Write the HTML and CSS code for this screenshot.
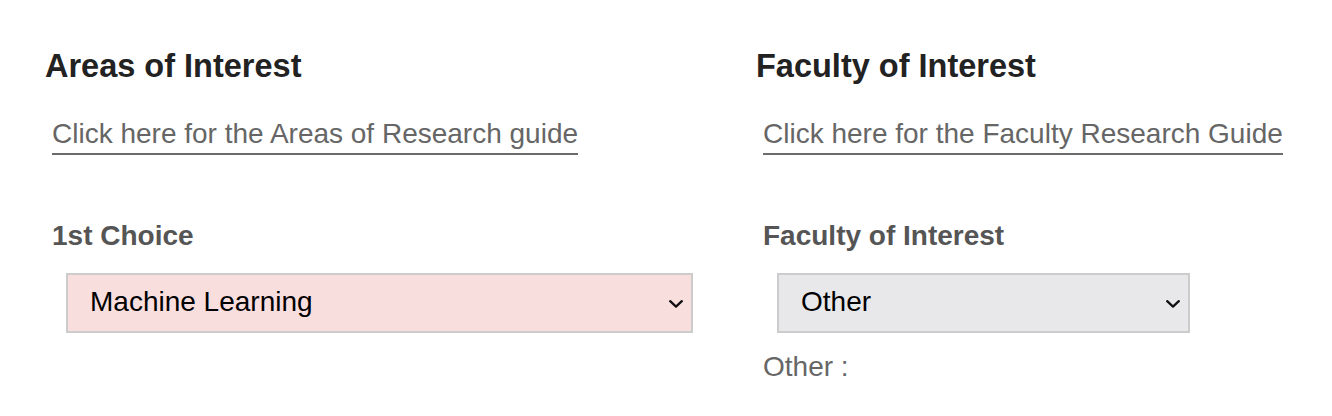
FILE: index.html
```html
<!DOCTYPE html>
<html lang="en">
<head>
<meta charset="utf-8">
<title>Areas and Faculty of Interest</title>
<link rel="stylesheet" href="styles.css">
</head>
<body>
<div class="page">
  <section class="col">
    <h2 class="heading">Areas of Interest</h2>
    <div class="body">
      <a class="guide" href="#">Click here for the Areas of Research guide</a>
      <label class="label" for="choice1">1st Choice</label>
      <div class="select-wrap">
        <select id="choice1" class="select select-pink">
          <option>Machine Learning</option>
        </select>
        <svg class="chev" width="14" height="8" viewBox="0 0 14 8"><path d="M1.2 1.2 L7 6.6 L12.8 1.2" fill="none" stroke="#111" stroke-width="2.3" stroke-linecap="round" stroke-linejoin="round"/></svg>
      </div>
    </div>
  </section>
  <section class="col">
    <h2 class="heading">Faculty of Interest</h2>
    <div class="body">
      <a class="guide" href="#">Click here for the Faculty Research Guide</a>
      <label class="label" for="faculty">Faculty of Interest</label>
      <div class="select-wrap select-wrap-narrow">
        <select id="faculty" class="select select-gray">
          <option>Other</option>
        </select>
        <svg class="chev" width="14" height="8" viewBox="0 0 14 8"><path d="M1.2 1.2 L7 6.6 L12.8 1.2" fill="none" stroke="#111" stroke-width="2.3" stroke-linecap="round" stroke-linejoin="round"/></svg>
      </div>
      <div class="other">Other :</div>
    </div>
  </section>
</div>
</body>
</html>
```

FILE: styles.css
```css
html, body {
  margin: 0;
  padding: 0;
  background: #ffffff;
}

body {
  font-family: "Liberation Sans", Arial, Helvetica, sans-serif;
}

.page {
  display: grid;
  grid-template-columns: 711px 1fr;
  padding: 46px 0 0 45px;
}

.col {
  display: flex;
  flex-direction: column;
}

.heading {
  margin: 0;
  font-size: 32.5px;
  line-height: 40px;
  font-weight: bold;
  color: #222222;
}

.body {
  display: flex;
  flex-direction: column;
  align-items: flex-start;
  padding-left: 7px;
}

.guide {
  margin-top: 32px;
  font-size: 28px;
  line-height: 32px;
  color: #666666;
  text-decoration: none;
  padding-bottom: 3px;
  border-bottom: 2px solid #6b6b6b;
}

.label {
  margin-top: 65px;
  font-size: 28px;
  line-height: 32px;
  font-weight: bold;
  color: #555555;
}

.select-wrap {
  position: relative;
  margin-top: 21px;
  margin-left: 14px;
  width: 627px;
}

.select-wrap-narrow {
  width: 413px;
}

.select {
  display: block;
  width: 100%;
  box-sizing: border-box;
  -webkit-appearance: none;
  appearance: none;
  margin: 0;
  height: 60px;
  padding: 11px 40px 13px 22px;
  border: 2px solid #cccccc;
  border-radius: 0;
  font-family: "Liberation Sans", Arial, Helvetica, sans-serif;
  font-size: 28px;
  line-height: 32px;
  color: #000000;
}

.select-pink {
  background-color: #f9dede;
}

.select-gray {
  background-color: #e8e8eb;
}

.chev {
  position: absolute;
  right: 10px;
  top: 27px;
  pointer-events: none;
}

.other {
  margin-top: 18px;
  font-size: 28px;
  line-height: 32px;
  color: #666666;
}
```
